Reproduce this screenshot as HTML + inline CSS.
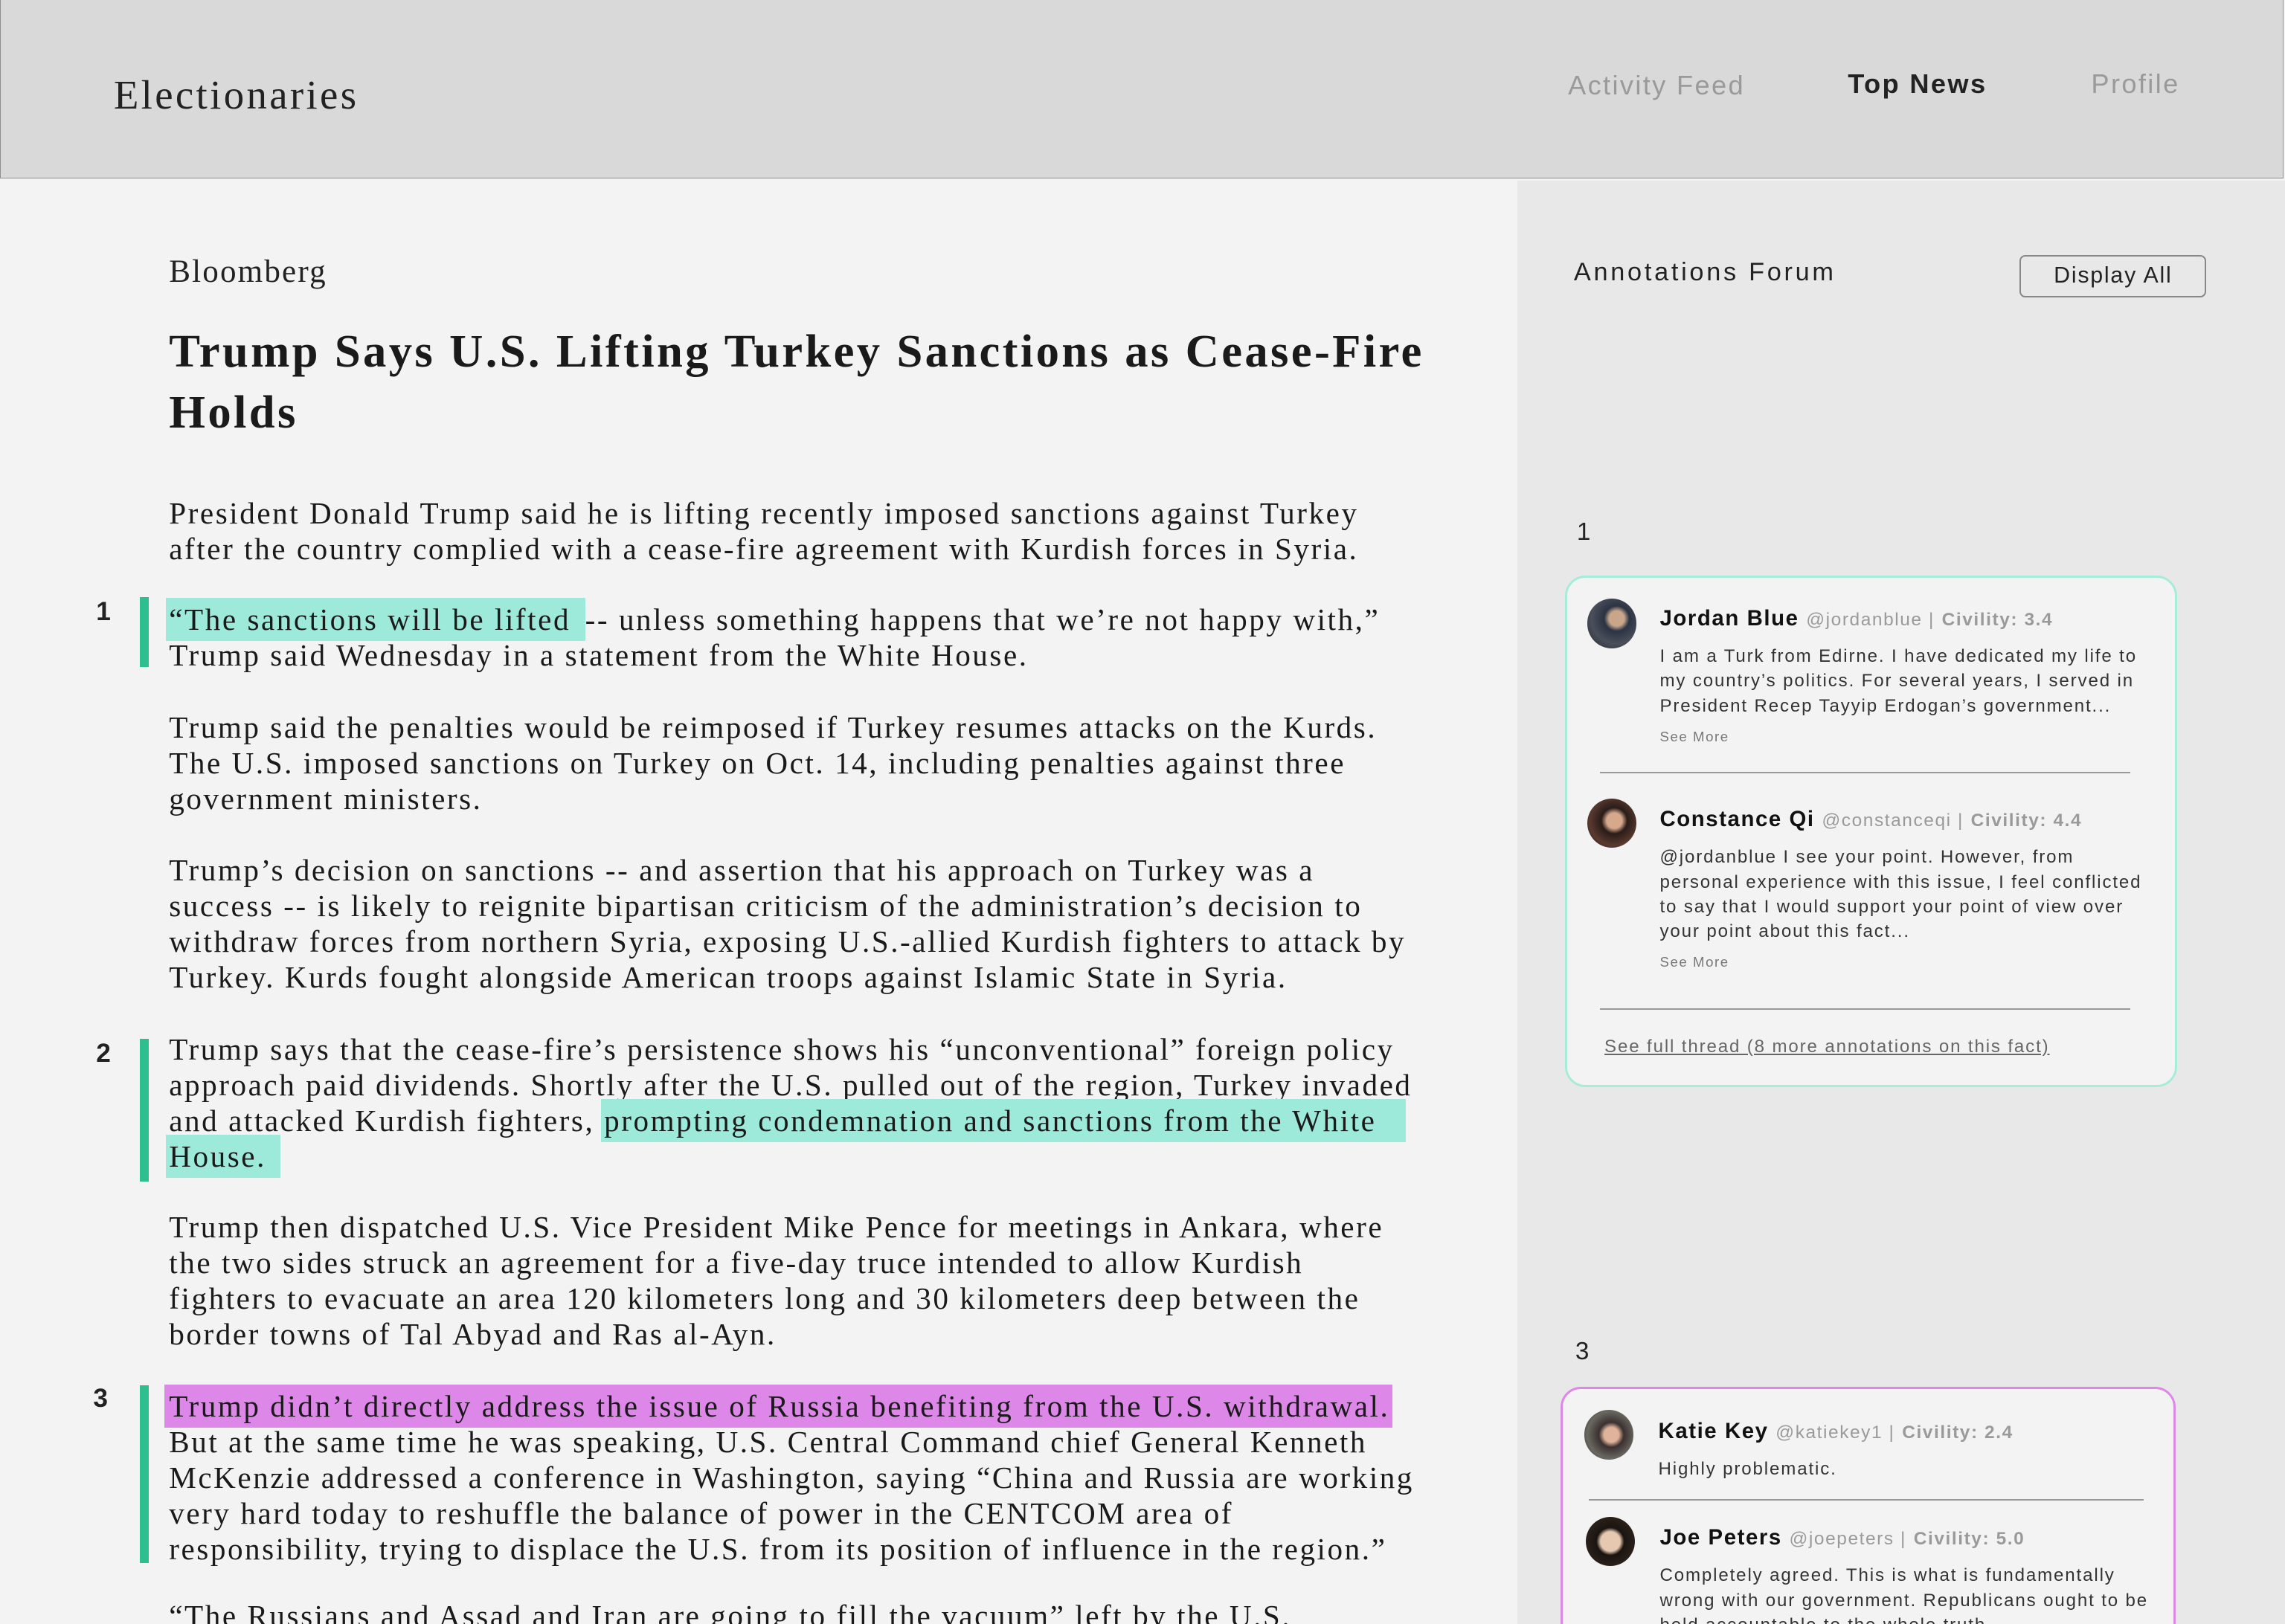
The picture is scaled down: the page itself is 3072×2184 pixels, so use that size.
<!DOCTYPE html>
<html><head><meta charset="utf-8">
<style>
html,body{margin:0;padding:0;width:3072px;height:2184px;overflow:hidden;background:#f3f3f3}
#w{zoom:1.95918;width:1568px;height:1115px;position:relative;overflow:hidden;background:#f3f3f3}
.a{position:absolute}
.hdr{left:0;top:0;width:1566px;height:122px;background:#d9d9d9;border:1px solid #8f8f8f;border-top:0}
.logo{left:78px;top:49px;font:28px "Liberation Serif",serif;color:#222;letter-spacing:1.7px}
.nav{font:18.5px "Liberation Sans",sans-serif;letter-spacing:1.2px;top:48px}
.side{left:1041px;top:124px;width:527px;height:991px;background:#e8e8e8}
.src{left:116px;top:174px;font:22px "Liberation Serif",serif;color:#222;letter-spacing:1.1px}
.h1{left:116px;top:220px;font:bold 32px/42px "Liberation Serif",serif;color:#1a1a1a;letter-spacing:1.7px;white-space:nowrap}
.p{left:116px;font:21px/24.5px "Liberation Serif",serif;color:#1a1a1a;letter-spacing:1.3px;white-space:nowrap}
.hg{background:#9eeada;padding:3px 10px 3px 2px;margin-left:-2px}
.hp{background:#dd88e8;padding:3px 2px 3px 3px;margin-left:-3px}
.bar{left:96px;width:6px;background:#2dbf8f}
.num{font:bold 18px "Liberation Sans",sans-serif;color:#222}
.card{background:#f3f3f3;border-radius:14px}
.sf{font-family:"Liberation Sans",sans-serif}
.name{font:15px "Liberation Sans",sans-serif;color:#111;letter-spacing:0.8px;white-space:nowrap}
.name b{font-weight:bold}
.name .h{color:#9a9a9a;font-size:12.5px;font-weight:normal}
.name .c{color:#9a9a9a;font-size:12.5px;font-weight:bold}
.txt{font:12.3px/17px "Liberation Sans",sans-serif;color:#333;letter-spacing:0.95px;white-space:nowrap}
.sm{font:9.5px "Liberation Sans",sans-serif;color:#777;letter-spacing:0.8px}
.av{width:34px;height:34px;border-radius:50%}
.hr{height:1px;background:#999}
</style></head><body><div id="w">
<div class="a hdr"></div>
<div class="a logo">Electionaries</div>
<div class="a nav" style="left:1076px;color:#9a9a9a">Activity Feed</div>
<div class="a nav" style="left:1268px;top:47px;color:#222;font-weight:bold">Top News</div>
<div class="a nav" style="left:1435px;top:47px;color:#9a9a9a">Profile</div>
<div class="a side"></div>

<div class="a src">Bloomberg</div>
<div class="a h1">Trump Says U.S. Lifting Turkey Sanctions as Cease-Fire<br>Holds</div>

<div class="a p" style="top:340px">President Donald Trump said he is lifting recently imposed sanctions against Turkey<br>after the country complied with a cease-fire agreement with Kurdish forces in Syria.</div>

<div class="a num" style="left:66px;top:410px">1</div>
<div class="a bar" style="top:410px;height:48px"></div>
<div class="a p" style="top:413px"><span class="hg">“The sanctions will be lifted</span>-- unless something happens that we’re not happy with,”<br>Trump said Wednesday in a statement from the White House.</div>

<div class="a p" style="top:487px">Trump said the penalties would be reimposed if Turkey resumes attacks on the Kurds.<br>The U.S. imposed sanctions on Turkey on Oct. 14, including penalties against three<br>government ministers.</div>

<div class="a p" style="top:585px">Trump’s decision on sanctions -- and assertion that his approach on Turkey was a<br>success -- is likely to reignite bipartisan criticism of the administration’s decision to<br>withdraw forces from northern Syria, exposing U.S.-allied Kurdish fighters to attack by<br>Turkey. Kurds fought alongside American troops against Islamic State in Syria.</div>

<div class="a num" style="left:66px;top:713px">2</div>
<div class="a bar" style="top:713px;height:98px"></div>
<div class="a p" style="top:708px">Trump says that the cease-fire’s persistence shows his “unconventional” foreign policy<br>approach paid dividends. Shortly after the U.S. pulled out of the region, Turkey invaded<br>and attacked Kurdish fighters, <span class="hg" style="padding-right:20px">prompting condemnation and sanctions from the White</span><br><span class="hg">House.</span></div>

<div class="a p" style="top:830px">Trump then dispatched U.S. Vice President Mike Pence for meetings in Ankara, where<br>the two sides struck an agreement for a five-day truce intended to allow Kurdish<br>fighters to evacuate an area 120 kilometers long and 30 kilometers deep between the<br>border towns of Tal Abyad and Ras al-Ayn.</div>

<div class="a num" style="left:64px;top:950px">3</div>
<div class="a bar" style="top:951px;height:122px"></div>
<div class="a p" style="top:953px"><span class="hp">Trump didn’t directly address the issue of Russia benefiting from the U.S. withdrawal.</span><br>But at the same time he was speaking, U.S. Central Command chief General Kenneth<br>McKenzie addressed a conference in Washington, saying “China and Russia are working<br>very hard today to reshuffle the balance of power in the CENTCOM area of<br>responsibility, trying to displace the U.S. from its position of influence in the region.”</div>

<div class="a p" style="top:1097px">“The Russians and Assad and Iran are going to fill the vacuum” left by the U.S.</div>

<!-- sidebar -->
<div class="a sf" style="left:1080px;top:177px;font-size:17.5px;letter-spacing:1.9px;color:#222">Annotations Forum</div>
<div class="a sf" style="left:1386px;top:175px;width:126px;height:27px;border:1.5px solid #888;border-radius:4px;text-align:center;font-size:15.5px;line-height:27px;letter-spacing:0.9px;color:#222">Display All</div>

<div class="a sf" style="left:1082px;top:356px;font-size:17px;color:#222">1</div>
<div class="a card" style="left:1074px;top:395px;width:417px;height:348px;border:2px solid #a7ecd9"></div>
<div class="a av" style="left:1089px;top:411px;background:radial-gradient(circle at 60% 40%,#c9a58a 0 18%,#2b3344 30%,#4a4f5a 60%,#1e2530)"></div>
<div class="a name" style="left:1139px;top:416px"><b>Jordan Blue</b> <span class="h">@jordanblue |</span> <span class="c">Civility: 3.4</span></div>
<div class="a txt" style="left:1139px;top:442px">I am a Turk from Edirne. I have dedicated my life to<br>my country’s politics. For several years, I served in<br>President Recep Tayyip Erdogan’s government...</div>
<div class="a sm" style="left:1139px;top:500px">See More</div>
<div class="a hr" style="left:1098px;top:530px;width:364px"></div>
<div class="a av" style="left:1089px;top:548px;background:radial-gradient(circle at 55% 45%,#d7a98c 0 20%,#2a1c18 34%,#5a3a30 65%,#1a1212)"></div>
<div class="a name" style="left:1139px;top:554px"><b>Constance Qi</b> <span class="h">@constanceqi |</span> <span class="c">Civility: 4.4</span></div>
<div class="a txt" style="left:1139px;top:580px">@jordanblue I see your point. However, from<br>personal experience with this issue, I feel conflicted<br>to say that I would support your point of view over<br>your point about this fact...</div>
<div class="a sm" style="left:1139px;top:655px">See More</div>
<div class="a hr" style="left:1098px;top:692px;width:364px"></div>
<div class="a txt" style="left:1101px;top:710px;color:#666;text-decoration:underline">See full thread (8 more annotations on this fact)</div>

<div class="a sf" style="left:1081px;top:918px;font-size:17px;color:#222">3</div>
<div class="a card" style="left:1071px;top:952px;width:419px;height:200px;border:2px solid #dd88e8"></div>
<div class="a av" style="left:1087px;top:968px;background:radial-gradient(circle at 55% 50%,#e0b49a 0 20%,#3a3030 34%,#6a6860 65%,#2a2a28)"></div>
<div class="a name" style="left:1138px;top:974px"><b>Katie Key</b> <span class="h">@katiekey1 |</span> <span class="c">Civility: 2.4</span></div>
<div class="a txt" style="left:1138px;top:1000px">Highly problematic.</div>
<div class="a hr" style="left:1090px;top:1029px;width:381px"></div>
<div class="a av" style="left:1088px;top:1041px;background:radial-gradient(circle at 50% 50%,#e6c8b0 0 28%,#1a1410 40%,#2a201a 70%,#111)"></div>
<div class="a name" style="left:1139px;top:1047px"><b>Joe Peters</b> <span class="h">@joepeters |</span> <span class="c">Civility: 5.0</span></div>
<div class="a txt" style="left:1139px;top:1073px">Completely agreed. This is what is fundamentally<br>wrong with our government. Republicans ought to be<br>held accountable to the whole truth.</div>
</div></body></html>
